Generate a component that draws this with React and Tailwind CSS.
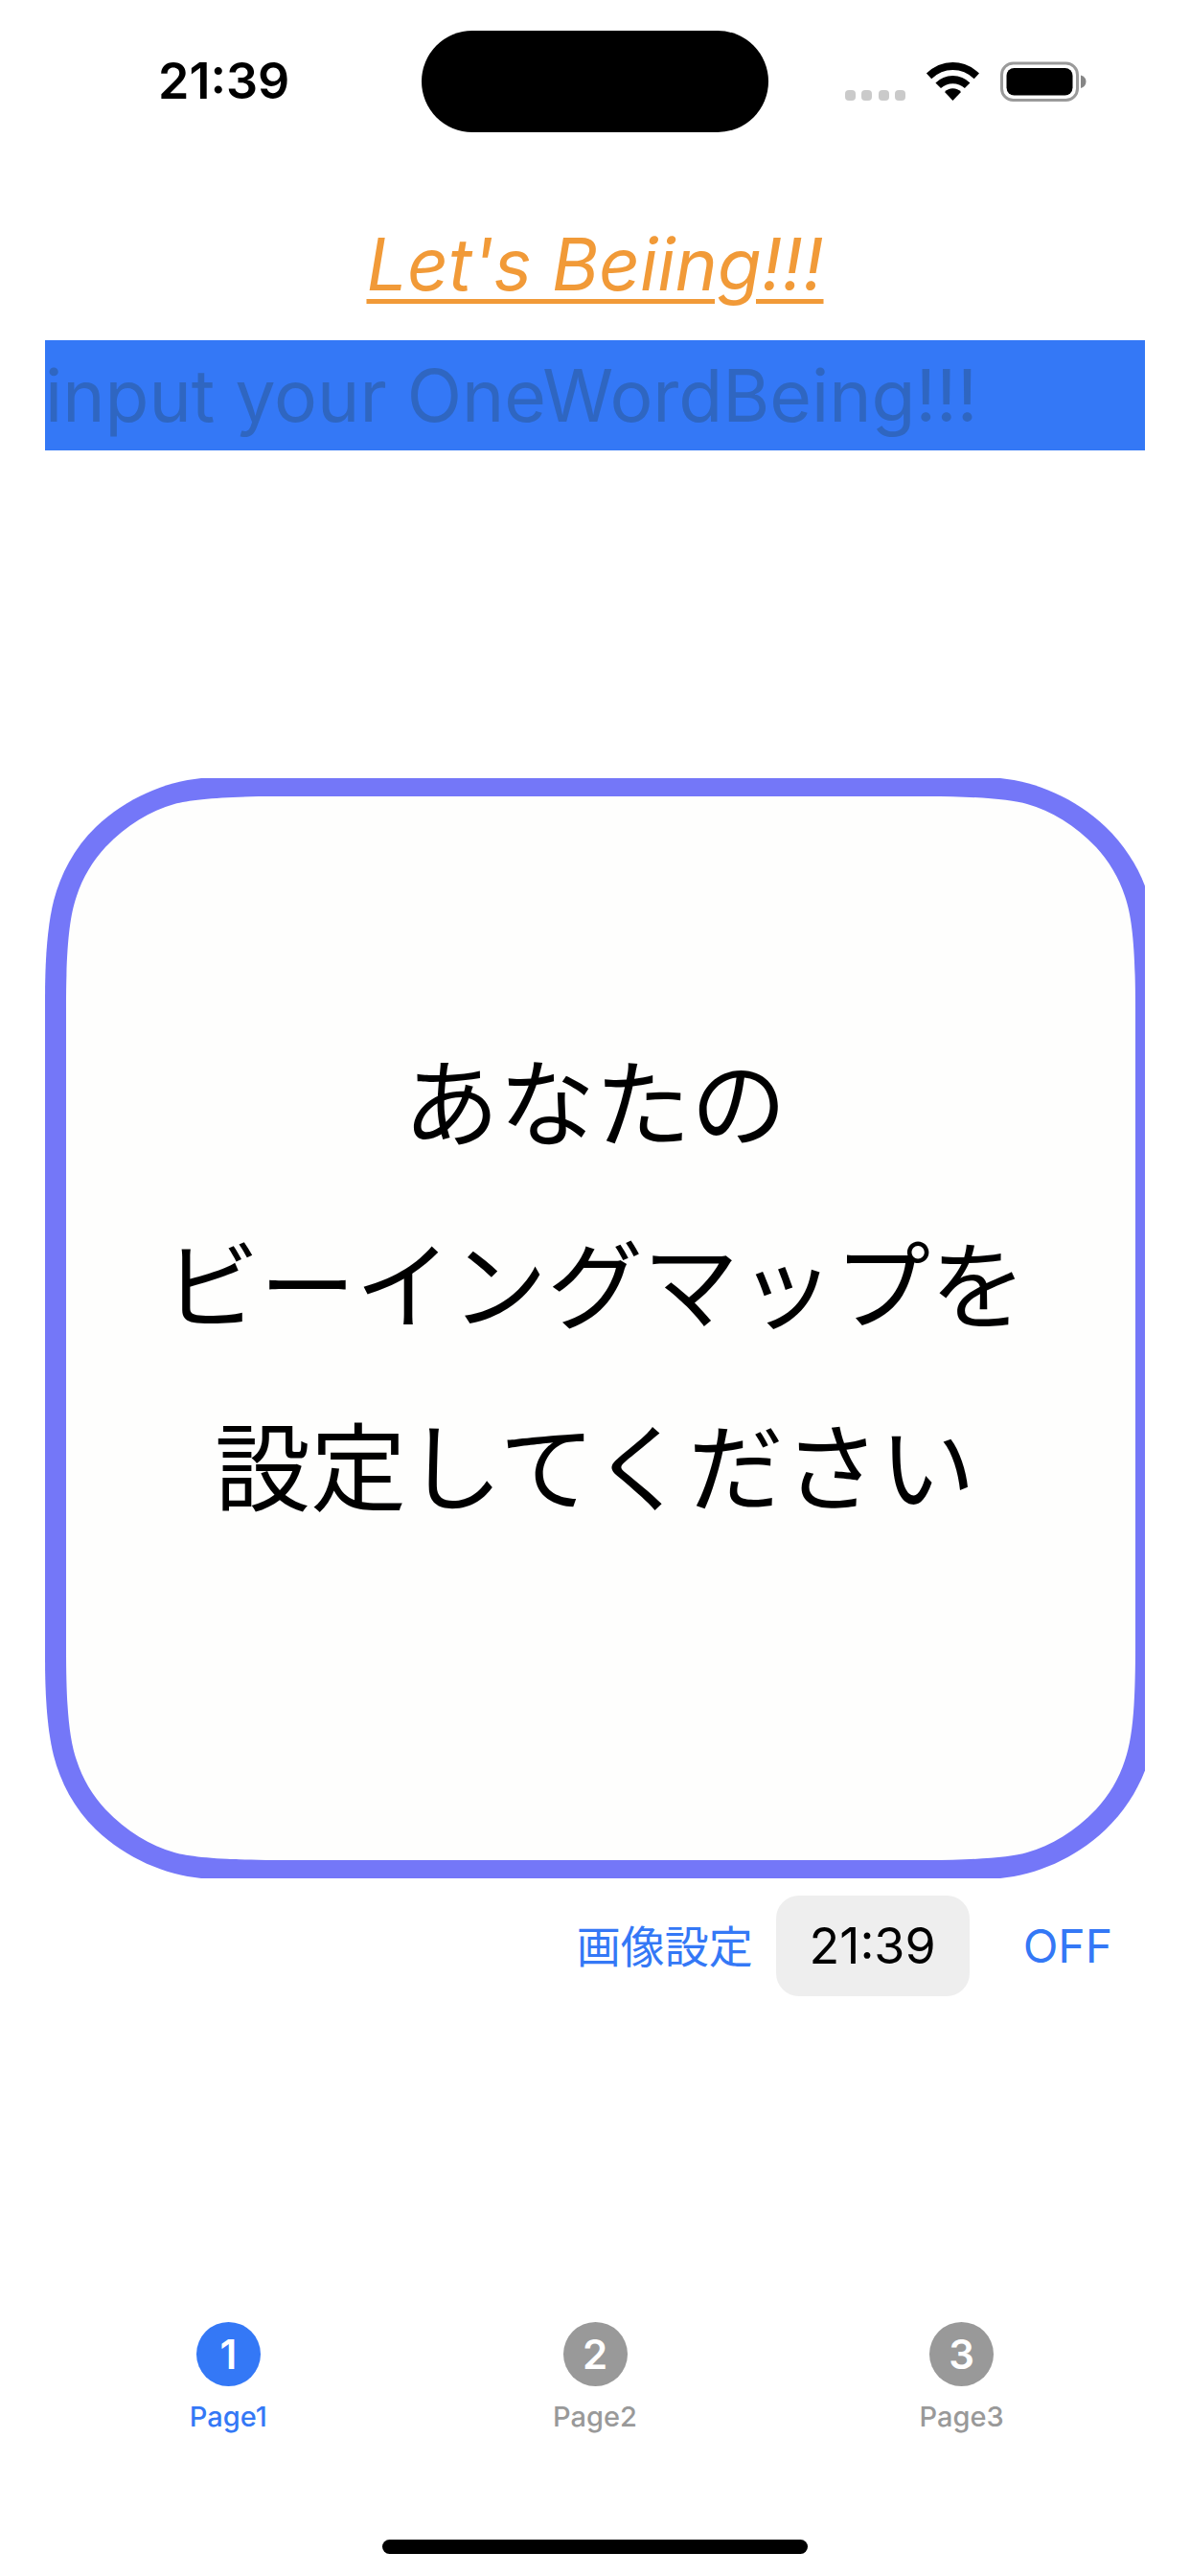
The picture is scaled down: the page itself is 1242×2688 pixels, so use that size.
import React, { useState } from 'react';

const tabs = [
    { id: 1, label: 'Page1' },
    { id: 2, label: 'Page2' },
    { id: 3, label: 'Page3' },
];

const StatusBar = () => (
    <header className="grid grid-cols-[1fr_auto_1fr] items-center pt-8 text-black">
        <div className="pl-[165px] text-[52px] leading-[60px] font-semibold">21:39</div>
        <div className="h-[106px] w-[362px] rounded-full bg-black" />
        <div className="flex items-center justify-end pr-[108px]">
            <svg width="252" height="42" viewBox="0 0 252 42" aria-hidden="true">
                {/* Cellular */}
                <g fill="#cacaca">
                    <rect x="0" y="30" width="11" height="11" rx="4" />
                    <rect x="17" y="30" width="11" height="11" rx="4" />
                    <rect x="35" y="30" width="11" height="11" rx="4" />
                    <rect x="52" y="30" width="11" height="11" rx="4" />
                </g>
                {/* Wi-Fi */}
                <g fill="#000">
                    <path d="M84.900 12.600 Q97 1 112.400 1 Q128 1 140 12.600 L134.700 18.200 Q125 9 112.400 9 Q100 9 90.200 18.200 Z" />
                    <path d="M94.400 22.500 Q102 14.900 112.400 14.900 Q123 14.900 130.400 22.500 L124.900 28 Q119.500 23.200 112.400 23.200 Q105.500 23.200 100 28 Z" />
                    <path d="M104 32 Q107.500 28.300 112.400 28.300 Q117.500 28.300 121 32 L112.400 41 Z" />
                </g>
                {/* Battery */}
                <rect x="163.500" y="2" width="79" height="38.500" rx="12" fill="none" stroke="#9a9a9a" strokeWidth="3" />
                <rect x="168.500" y="7" width="69" height="28.500" rx="8" fill="#000" />
                <path d="M246 14.500 C249.500 15.500 251.500 18 251.500 21 C251.500 24.500 249.500 27 246 28 Z" fill="#868686" />
            </svg>
        </div>
    </header>
);

const BeingMap = () => (
    <div className="relative flex aspect-square w-full items-center justify-center overflow-hidden">
        {/* Frame artwork, slightly wider than the box so its right edge is cut */}
        <svg className="absolute inset-0 h-full w-full" viewBox="0 0 1148 1148" aria-hidden="true">
            <path
                fill="#7477f8"
                d="M163 0 H997 C1035 4 1074 20 1107 51 C1130 73 1146 101 1153 128 C1158 152 1160 185 1160 230 V918 C1160 963 1158 996 1153 1020 C1146 1047 1130 1075 1107 1097 C1074 1128 1035 1144 997 1148 H163 C125 1144 86 1128 53 1097 C30 1075 16 1047 9 1020 C3 996 0 963 0 918 V230 C0 185 3 152 9 128 C16 101 30 73 53 51 C86 20 125 4 163 0 Z"
            />
            <path
                fill="#fefefd"
                d="M240 19 H920 C970 19 1008 22 1025 27 C1050 34 1075 49 1097 72 C1110 86 1121 104 1127 123 C1135 146 1138 180 1138 240 V908 C1138 968 1135 1002 1127 1025 C1121 1044 1110 1062 1097 1076 C1075 1099 1050 1114 1025 1121 C1008 1126 970 1129 920 1129 H240 C190 1129 152 1126 135 1121 C110 1114 85 1099 63 1076 C50 1062 39 1044 33 1025 C25 1002 22 968 22 908 V240 C22 180 25 146 33 123 C39 104 50 86 63 72 C85 49 110 34 135 27 C152 22 190 19 240 19 Z"
            />
        </svg>
        <p className="relative pb-[86px] text-center text-[100px] leading-[190px] text-black">
            あなたの
            <br />
            ビーイングマップを
            <br />
            設定してください
        </p>
    </div>
);

const TabBar = ({ active, onChange }) => (
    <nav className="flex px-[47px]">
        {tabs.map((tab) => (
            <button
                key={tab.id}
                type="button"
                onClick={() => onChange(tab.id)}
                className={`flex flex-1 flex-col items-center gap-4 ${active === tab.id ? 'text-[#3478f6]' : 'text-[#999999]'}`}
            >
                <span
                    className={`flex size-[67px] items-center justify-center rounded-full text-[42px] leading-none font-semibold text-white ${active === tab.id ? 'bg-[#3478f6]' : 'bg-[#999999]'}`}
                >
                    {tab.id}
                </span>
                <span className="text-[29px] leading-8 font-medium">{tab.label}</span>
            </button>
        ))}
    </nav>
);

const App = () => {
    const [word, setWord] = useState('');
    const [alarmOn, setAlarmOn] = useState(false);
    const [page, setPage] = useState(1);

    return (
        <div className="flex min-h-screen flex-col bg-white font-[Inter,'Noto_Sans_CJK_JP',sans-serif]">
            <StatusBar />

            <main className="flex flex-1 flex-col px-[47px] pt-[91px]">
                <h1 className="text-center text-[75px] leading-[94px] text-[#f19a38] italic underline decoration-[5px] underline-offset-[9px]">
                    Let's Beiing!!!
                </h1>

                <input
                    type="text"
                    aria-label="OneWordBeing"
                    placeholder="input your OneWordBeing!!!"
                    value={word}
                    onChange={(e) => setWord(e.target.value)}
                    className="mt-8 h-[115px] w-full bg-[#3478f6] text-[75px] text-black outline-none placeholder:text-[#2f66c1]"
                />

                <div className="mt-[342px]">
                    <BeingMap />
                </div>

                <div className="mt-[18px] flex items-center justify-end pr-[34px] leading-[60px]">
                    <button type="button" className="text-[46px] text-[#3478f6]">
                        画像設定
                    </button>
                    <button type="button" className="ml-6 h-[105px] w-[202px] rounded-3xl bg-[#eeeeee] text-[52px] text-black">
                        21:39
                    </button>
                    <button type="button" onClick={() => setAlarmOn(!alarmOn)} className="ml-14 text-[48px] text-[#3478f6]">
                        {alarmOn ? 'ON' : 'OFF'}
                    </button>
                </div>
            </main>

            <TabBar active={page} onChange={setPage} />

            <div className="mt-28 mb-[23px] h-[15px] w-[444px] self-center rounded-full bg-black" />
        </div>
    );
};

export default App;
